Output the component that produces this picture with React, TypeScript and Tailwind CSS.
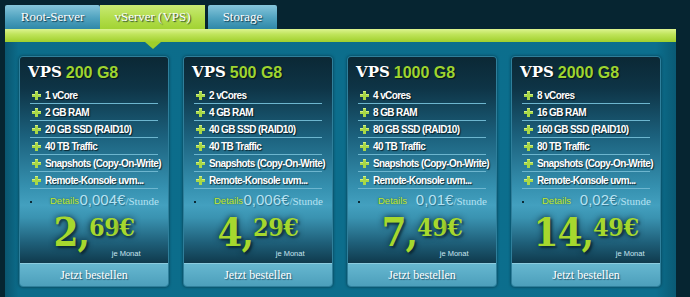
const plans = [
  { name: "200 G8", feats: ["1 vCore", "2 GB RAM", "20 GB SSD (RAID10)", "40 TB Traffic"], hour: "0,004€", euro: "2", cents: "69" },
  { name: "500 G8", feats: ["2 vCores", "4 GB RAM", "40 GB SSD (RAID10)", "40 TB Traffic"], hour: "0,006€", euro: "4", cents: "29" },
  { name: "1000 G8", feats: ["4 vCores", "8 GB RAM", "80 GB SSD (RAID10)", "40 TB Traffic"], hour: "0,01€", euro: "7", cents: "49" },
  { name: "2000 G8", feats: ["8 vCores", "16 GB RAM", "160 GB SSD (RAID10)", "80 TB Traffic"], hour: "0,02€", euro: "14", cents: "49" },
];

const extras = ["Snapshots (Copy-On-Write)", "Remote-Konsole uvm..."];

const Plus = () => (
  <svg width="9" height="9" viewBox="0 0 9 9" className="shrink-0">
    <path d="M3 0h3v3h3v3H6v3H3V6H0V3h3z" fill="#a9d846" />
    <path d="M3 0h3v1H3zM0 3h3v1H0zM6 3h3v1H6z" fill="#d3f08a" />
  </svg>
);

const Card = ({ plan }: { plan: (typeof plans)[number] }) => {
  const rows = [...plan.feats, ...extras];
  return (
    <div className="w-[150px] h-[231px] flex flex-col rounded-[4px] overflow-hidden border border-[#2f7f9b] shadow-[0_0_3px_rgba(0,20,30,0.6)]">
      <div className="flex-1 flex flex-col bg-[linear-gradient(180deg,#0b2835_0%,#0e3446_15%,#1b607c_38%,#3590af_63%,#43a0bf_72%,#3a93b1_78%,#1f607a_90%,#0f3a4d_100%)]">
        {/* title */}
        <div className="h-[30px] flex items-center pl-[8px] pt-[1px] gap-[4px] [text-shadow:1px_1px_1px_rgba(0,0,0,0.6)]">
          <span className="text-white text-[15px] font-bold font-['DejaVu_Serif',serif]">VPS</span>
          <span className="text-[#9ed430] text-[16px] font-bold font-['Liberation_Sans',sans-serif]">{plan.name}</span>
        </div>

        {/* features */}
        <ul className="mx-[10px] flex flex-col">
          {rows.map((f) => (
            <li
              key={f}
              className="h-[17px] flex items-center gap-[4px] pl-[2px] border-b border-[#6db6cf] text-white text-[10px] font-bold tracking-[-0.6px] font-['Liberation_Sans',sans-serif] [text-shadow:1px_1px_1px_rgba(0,0,0,0.7)]"
            >
              <Plus />
              <span className="whitespace-nowrap">{f}</span>
            </li>
          ))}
        </ul>

        {/* hourly */}
        <div className="h-[22px] flex items-center pl-[10px] pr-[9px] font-['Liberation_Sans',sans-serif]">
          <span className="w-[2px] h-[2px] bg-[#0c2a36] mr-[18px] mt-[4px]" />
          <span className="text-[9.5px] text-[#c0e832] mt-[2px] [text-shadow:0_0_2px_rgba(30,70,20,0.7)]">Details</span>
          <span className="ml-auto text-[15px] text-[#b6e2f2] [text-shadow:1px_1px_1px_rgba(0,40,60,0.4)]">{plan.hour}</span>
          <span className="text-[11px] text-[#b6e2f2] font-['Liberation_Serif',serif] mt-[3px]">/Stunde</span>
        </div>

        {/* monthly */}
        <div className="flex-1 flex justify-center items-start pt-[1px] text-[#a6d82e] font-['DejaVu_Serif_Condensed','DejaVu_Serif',serif] font-bold [text-shadow:0_0_6px_rgba(0,25,35,0.9),2px_2px_2px_rgba(0,0,0,0.4)]">
          <span className="text-[40px] leading-none tracking-[-1px]">{plan.euro},</span>
          <div className="flex flex-col items-end">
            <span className="text-[25px] leading-none mt-[3px] tracking-[-0.5px]">{plan.cents}€</span>
            <span className="text-[7.5px] font-normal text-[#c9e6f0] font-['Liberation_Sans',sans-serif] mt-[8px] mr-[-6px] [text-shadow:none]">je Monat</span>
          </div>
        </div>
      </div>

      {/* button */}
      <div className="h-[23px] flex items-center justify-center border-t border-[#8ccde0] bg-[linear-gradient(180deg,#66b7d0_0%,#4c9fbb_100%)] text-white text-[12px] font-['Liberation_Serif',serif] [text-shadow:1px_1px_1px_rgba(0,40,60,0.6)]">
        Jetzt bestellen
      </div>
    </div>
  );
};

const tabText = "text-[13px] text-white font-['Liberation_Serif',serif] [text-shadow:1px_1px_1px_rgba(0,30,45,0.8)]";

export default function App() {
  return (
    <div className="w-[690px] h-[297px] bg-[#062531] overflow-hidden">
      {/* tabs */}
      <div className="flex pt-[5px] pl-[5px] h-[29px]">
        <div className={`w-[95px] flex items-center justify-center rounded-t-[2px] bg-[linear-gradient(180deg,#86c6db_0%,#4fa2bf_55%,#2f88a8_100%)] ${tabText}`}>
          Root-Server
        </div>
        <div className={`w-[105px] flex items-center justify-center bg-[linear-gradient(180deg,#c8ea74_0%,#b0dc48_60%,#a2d333_100%)] ${tabText}`}>
          vServer (VPS)
        </div>
        <div className={`w-[69px] ml-[3px] flex items-center justify-center rounded-t-[2px] bg-[linear-gradient(180deg,#86c6db_0%,#4fa2bf_55%,#2f88a8_100%)] ${tabText}`}>
          Storage
        </div>
      </div>

      {/* green bar */}
      <div className="relative ml-[5px] w-[671px] h-[13px] bg-[linear-gradient(180deg,#dcf490_0%,#c0e45c_40%,#a0d02c_100%)]">
        <div className="absolute left-[140px] top-[13px] w-0 h-0 border-l-[8px] border-r-[8px] border-t-[7px] border-l-transparent border-r-transparent border-t-[#9fcf2b] z-10" />
      </div>

      {/* panel */}
      <div className="ml-[5px] w-[671px] h-[255px] bg-[linear-gradient(90deg,#0a5670_0%,#0c6c8a_2%,#0c6f8e_97%,#0a5a74_100%)] pl-[14px] pt-[14px] flex gap-[14px]">
        {plans.map((p) => (
          <Card key={p.name} plan={p} />
        ))}
      </div>
    </div>
  );
}
